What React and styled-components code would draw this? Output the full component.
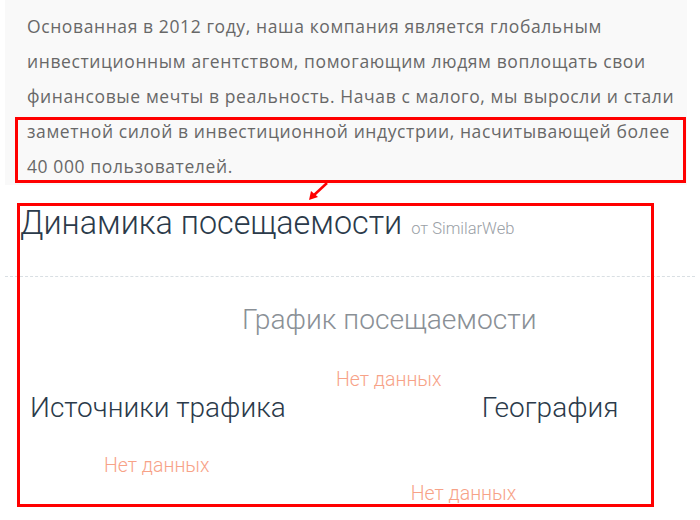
import React from "react";
import styled, { createGlobalStyle } from "styled-components";

const Global = createGlobalStyle`
  html, body { margin: 0; padding: 0; background: #ffffff; }
  body { width: 700px; height: 520px; overflow: hidden; position: relative; }
`;

const Page = styled.div`
  position: relative;
  width: 700px;
  height: 520px;
`;

const About = styled.div`
  margin-left: 5px;
  width: 682px;
  height: 185px;
  box-sizing: border-box;
  padding: 9px 0 0 22px;
  background: #f9f9f9;
  font-family: "Open Sans", "Noto Sans", sans-serif;
  font-size: 17.5px;
  letter-spacing: 0.6px;
  line-height: 35px;
  color: #686868;
`;

const Line = styled.span`
  display: block;
  white-space: nowrap;
`;

const Section = styled.div`
  font-family: Roboto, "Liberation Sans", sans-serif;
  font-weight: 300;
`;

const HeadingRow = styled.div`
  display: flex;
  align-items: baseline;
  gap: 9px;
  padding: 22px 0 0 20px;
`;

const Heading = styled.h2`
  margin: 0;
  font-size: 32.3px;
  font-weight: 300;
  line-height: 1;
  color: #2b3a4a;
`;

const Source = styled.span`
  font-size: 16.5px;
  color: #9aa0a6;
  font-weight: 300;
`;

const Divider = styled.div`
  margin: 37px 5px 0 5px;
  height: 0;
  border-top: 1px dashed #d9dfe3;
`;

const Block = styled.div`
  display: flex;
  flex-direction: column;
  align-items: flex-start;
  padding-left: ${(p) => p.$indent}px;
  margin-top: ${(p) => p.$top || 0}px;
`;

const Title = styled.div`
  font-size: ${(p) => p.$size}px;
  line-height: 1;
  color: ${(p) => p.$color};
  font-weight: 300;
  white-space: nowrap;
`;

const NoData = styled.div`
  font-size: 19.5px;
  line-height: 1;
  color: #f7a287;
  font-weight: 300;
  white-space: nowrap;
  margin-top: ${(p) => p.$top}px;
  margin-left: ${(p) => p.$left}px;
`;

const Columns = styled.div`
  display: flex;
  align-items: flex-start;
`;

const Highlight = styled.div`
  position: absolute;
  left: ${(p) => p.$x}px;
  top: ${(p) => p.$y}px;
  width: ${(p) => p.$w}px;
  height: ${(p) => p.$h}px;
  box-sizing: border-box;
  border: 3px solid #ff0000;
  pointer-events: none;
`;

const Arrow = styled.svg`
  position: absolute;
  left: 305px;
  top: 180px;
`;

export default function App() {
  return (
    <Page>
      <Global />
      <About>
        <Line>Основанная в 2012 году, наша компания является глобальным</Line>
        <Line>инвестиционным агентством, помогающим людям воплощать свои</Line>
        <Line>финансовые мечты в реальность. Начав с малого, мы выросли и стали</Line>
        <Line>заметной силой в инвестиционной индустрии, насчитывающей более</Line>
        <Line>40 000 пользователей.</Line>
      </About>
      <Section>
        <HeadingRow>
          <Heading>Динамика посещаемости</Heading>
          <Source>от SimilarWeb</Source>
        </HeadingRow>
        <Divider />
        <Block $indent={242} $top={29}>
          <Title $size={28.2} $color="#8a9096">График посещаемости</Title>
          <NoData $top={35} $left={94}>Нет данных</NoData>
        </Block>
        <Columns>
          <Block $indent={30} $top={5}>
            <Title $size={28} $color="#2b3a4a">Источники трафика</Title>
            <NoData $top={34} $left={74}>Нет данных</NoData>
          </Block>
          <Block $indent={196} $top={5}>
            <Title $size={28} $color="#2b3a4a">География</Title>
            <NoData $top={62} $left={-71}>Нет данных</NoData>
          </Block>
        </Columns>
      </Section>
      <Highlight $x={15} $y={117} $w={671} $h={66} />
      <Highlight $x={17} $y={203} $w={637} $h={304} />
      <Arrow width="30" height="26" viewBox="0 0 30 26">
        <line x1="22" y1="3" x2="8" y2="16" stroke="#ff0000" strokeWidth="2.5" />
        <polygon points="4,20 6,11 13,17" fill="#ff0000" />
      </Arrow>
    </Page>
  );
}
